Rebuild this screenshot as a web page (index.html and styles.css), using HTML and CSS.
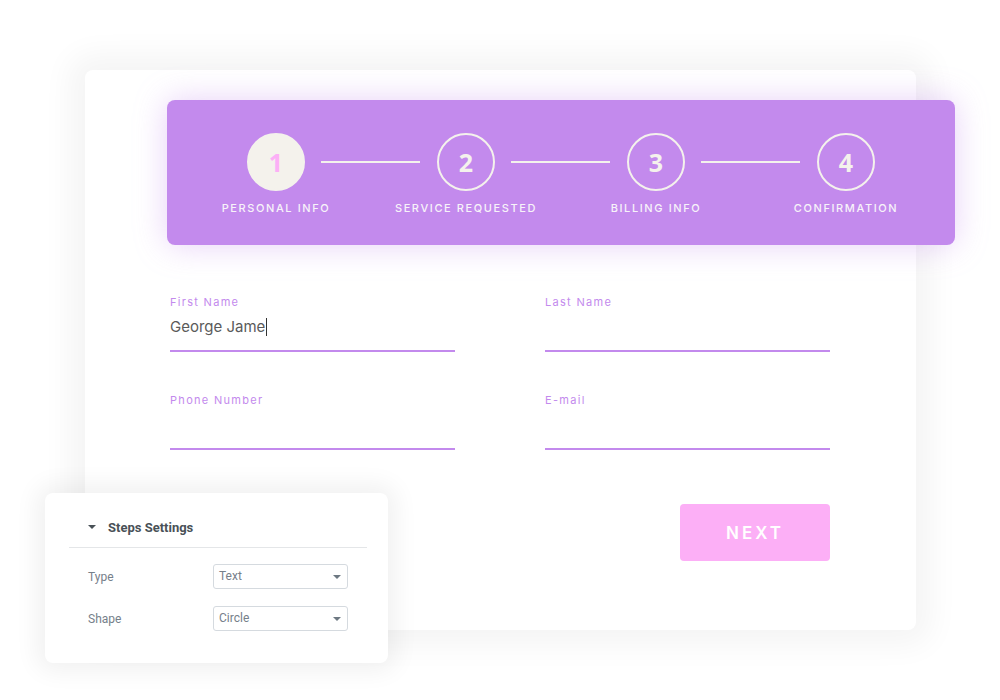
FILE: index.html
```html
<!DOCTYPE html>
<html lang="en">
<head>
    <meta charset="UTF-8">
    <meta name="viewport" content="width=device-width, initial-scale=1.0">
    <title>Multi Step Form</title>
    <link rel="stylesheet" href="styles.css">
</head>
<body>

    <div class="stage">

        <!-- Form Card -->
        <div class="form-card">

            <!-- Steps Bar -->
            <div class="steps">
                <div class="step active">
                    <div class="step-circle">1</div>
                    <div class="step-label">Personal Info</div>
                </div>
                <div class="step">
                    <div class="step-circle">2</div>
                    <div class="step-label">Service Requested</div>
                </div>
                <div class="step">
                    <div class="step-circle">3</div>
                    <div class="step-label">Billing Info</div>
                </div>
                <div class="step last">
                    <div class="step-circle">4</div>
                    <div class="step-label">Confirmation</div>
                </div>
            </div>

            <!-- Fields -->
            <div class="fields">
                <div class="field">
                    <label>First Name</label>
                    <div class="field-value">George Jame<span class="caret"></span></div>
                </div>
                <div class="field">
                    <label>Last Name</label>
                    <div class="field-value"></div>
                </div>
                <div class="field">
                    <label>Phone Number</label>
                    <div class="field-value"></div>
                </div>
                <div class="field">
                    <label>E-mail</label>
                    <div class="field-value"></div>
                </div>
                <button type="button" class="next-button">Next</button>
            </div>
        </div>

        <!-- Settings Panel -->
        <div class="settings-panel">
            <div class="settings-header">
                <span class="header-caret"></span>
                Steps Settings
            </div>
            <div class="settings-row">
                <span class="settings-label">Type</span>
                <div class="settings-select">Text<span class="select-caret"></span></div>
            </div>
            <div class="settings-row">
                <span class="settings-label">Shape</span>
                <div class="settings-select">Circle<span class="select-caret"></span></div>
            </div>
        </div>

    </div>

</body>
</html>
```

FILE: styles.css
```css
body {
    margin: 0;
    background-color: #ffffff;
    font-family: Inter, "Open Sans", sans-serif;
}
.stage {
    position: relative;
    width: 1000px;
    height: 700px;
    padding: 70px 0 0 85px;
    box-sizing: border-box;
}
.form-card {
    width: 831px;
    height: 560px;
    box-sizing: border-box;
    padding: 30px 0 0 82px;
    background: white;
    border-radius: 8px;
    box-shadow: 0 0 30px 16px rgba(0, 0, 0, 0.045);
}
.steps {
    width: 788px;
    height: 145px;
    box-sizing: border-box;
    padding: 33px 14px 0;
    display: grid;
    grid-template-columns: repeat(4, 1fr);
    background-color: #c38aed;
    border-radius: 8px;
    box-shadow: 0 0 32px rgba(195, 138, 237, 0.4);
}
.step {
    position: relative;
    display: flex;
    flex-direction: column;
    align-items: center;
}
.step::after {
    content: "";
    position: absolute;
    top: 28px;
    left: calc(50% + 45px);
    width: 99px;
    height: 1.5px;
    background: #f4f2ec;
}
.step.last::after {
    display: none;
}
.step-circle {
    width: 54px;
    height: 54px;
    border: 2px solid #f4f2ec;
    border-radius: 50%;
    display: flex;
    align-items: center;
    justify-content: center;
    color: #f4f2ec;
    font-family: "Open Sans", sans-serif;
    font-weight: 700;
    font-size: 25px;
}
.step.active .step-circle {
    background: #f4f2ec;
    color: #fcaff6;
}
.step-label {
    margin-top: 10px;
    color: #f7f3f9;
    font-size: 11px;
    font-weight: 500;
    letter-spacing: 1.6px;
    text-transform: uppercase;
}
.fields {
    width: 660px;
    margin: 50px 0 0 3px;
    display: grid;
    grid-template-columns: 285px 285px;
    column-gap: 90px;
    row-gap: 41px;
}
.field label {
    display: block;
    height: 14px;
    line-height: 14px;
    margin-bottom: 8px;
    color: #c38aed;
    font-size: 11px;
    letter-spacing: 1.3px;
}
.field-value {
    height: 20px;
    line-height: 20px;
    padding-bottom: 13px;
    border-bottom: 2px solid #c38aed;
    color: #5a5a5a;
    font-size: 15px;
}
.caret {
    display: inline-block;
    width: 1px;
    height: 18px;
    margin-left: 1px;
    vertical-align: -4px;
    background: #333333;
}
.next-button {
    grid-column: 2;
    justify-self: end;
    width: 150px;
    height: 57px;
    margin-top: 13px;
    border: none;
    border-radius: 4px;
    background-color: #fcaff6;
    color: white;
    font-family: Inter, sans-serif;
    font-size: 17px;
    font-weight: 600;
    letter-spacing: 3px;
    text-transform: uppercase;
}
.settings-panel {
    position: absolute;
    left: 45px;
    top: 493px;
    width: 343px;
    height: 170px;
    box-sizing: border-box;
    padding: 24px 21px 0 24px;
    background: white;
    border-radius: 8px;
    box-shadow: 0 0 24px 8px rgba(0, 0, 0, 0.06);
    font-family: Roboto, sans-serif;
}
.settings-header {
    display: flex;
    align-items: center;
    height: 20px;
    padding: 0 0 10px 19px;
    border-bottom: 1px solid #e4e6e8;
    color: #495157;
    font-size: 13px;
    font-weight: 700;
}
.header-caret {
    width: 0;
    height: 0;
    margin-right: 12px;
    border-left: 4px solid transparent;
    border-right: 4px solid transparent;
    border-top: 4px solid #495157;
}
.settings-row {
    display: flex;
    align-items: center;
    height: 25px;
    margin-top: 16px;
    padding-left: 19px;
}
.settings-row + .settings-row {
    margin-top: 17px;
}
.settings-label {
    width: 125px;
    color: #76808a;
    font-size: 12px;
}
.settings-select {
    position: relative;
    width: 135px;
    height: 25px;
    box-sizing: border-box;
    padding-left: 5px;
    line-height: 23px;
    border: 1px solid #d5dadf;
    border-radius: 3px;
    color: #76808a;
    font-size: 12px;
}
.select-caret {
    position: absolute;
    right: 6px;
    top: 10px;
    width: 0;
    height: 0;
    border-left: 4px solid transparent;
    border-right: 4px solid transparent;
    border-top: 4px solid #6d7882;
}
```
